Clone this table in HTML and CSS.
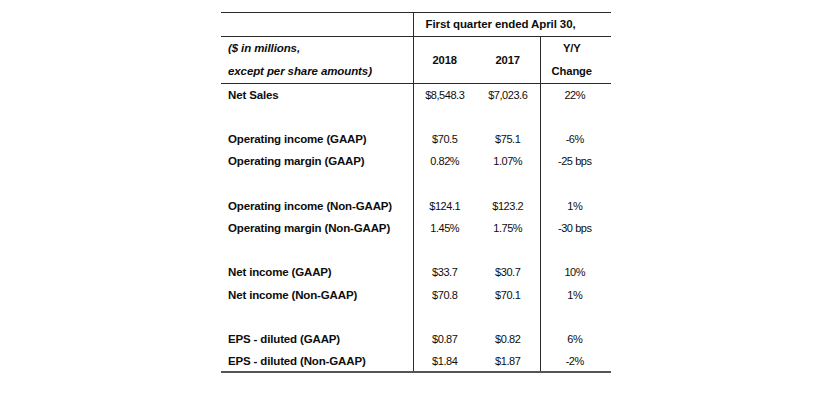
FILE: index.html
```html
<!DOCTYPE html>
<html lang="en">
<head>
<meta charset="utf-8">
<title>First quarter results</title>
<link rel="stylesheet" href="styles.css">
</head>
<body>
<div class="page">
  <table class="fin">
    <colgroup>
      <col class="c-label">
      <col class="c-y1">
      <col class="c-y2">
      <col class="c-chg">
    </colgroup>
    <thead>
      <tr class="h1">
        <th class="label"></th>
        <th class="period" colspan="3">First quarter ended April 30,</th>
      </tr>
      <tr class="h2">
        <th class="label units">($ in millions,<br>except per share amounts)</th>
        <th class="num first">2018</th>
        <th class="num">2017</th>
        <th class="num chg">Y/Y<br>Change</th>
      </tr>
    </thead>
    <tbody>
      <tr><td class="label">Net Sales</td><td class="num first">$8,548.3</td><td class="num">$7,023.6</td><td class="num chg">22%</td></tr>
      <tr class="gap"><td class="label"></td><td class="first"></td><td></td><td class="chg"></td></tr>
      <tr><td class="label">Operating income (GAAP)</td><td class="num first">$70.5</td><td class="num">$75.1</td><td class="num chg">-6%</td></tr>
      <tr><td class="label">Operating margin (GAAP)</td><td class="num first">0.82%</td><td class="num">1.07%</td><td class="num chg">-25 bps</td></tr>
      <tr class="gap"><td class="label"></td><td class="first"></td><td></td><td class="chg"></td></tr>
      <tr><td class="label">Operating income (Non-GAAP)</td><td class="num first">$124.1</td><td class="num">$123.2</td><td class="num chg">1%</td></tr>
      <tr><td class="label">Operating margin (Non-GAAP)</td><td class="num first">1.45%</td><td class="num">1.75%</td><td class="num chg">-30 bps</td></tr>
      <tr class="gap"><td class="label"></td><td class="first"></td><td></td><td class="chg"></td></tr>
      <tr><td class="label">Net income (GAAP)</td><td class="num first">$33.7</td><td class="num">$30.7</td><td class="num chg">10%</td></tr>
      <tr><td class="label">Net income (Non-GAAP)</td><td class="num first">$70.8</td><td class="num">$70.1</td><td class="num chg">1%</td></tr>
      <tr class="gap"><td class="label"></td><td class="first"></td><td></td><td class="chg"></td></tr>
      <tr><td class="label">EPS - diluted (GAAP)</td><td class="num first">$0.87</td><td class="num">$0.82</td><td class="num chg">6%</td></tr>
      <tr class="last"><td class="label">EPS - diluted (Non-GAAP)</td><td class="num first">$1.84</td><td class="num">$1.87</td><td class="num chg">-2%</td></tr>
    </tbody>
  </table>
</div>
</body>
</html>
```
FILE: styles.css
```css
html, body {
  margin: 0;
  padding: 0;
  background: #ffffff;
}

.page {
  padding: 12px 0 0 221px;
}

.fin {
  border-collapse: collapse;
  table-layout: fixed;
  width: 390px;
  font-family: "Liberation Sans", Arial, sans-serif;
  color: #0d0d0d;
}

.c-label { width: 192px; }
.c-y1 { width: 63px; }
.c-y2 { width: 64px; }
.c-chg { width: 71px; }

.fin th,
.fin td {
  padding: 0;
  vertical-align: middle;
}

.fin th {
  font-weight: bold;
  font-size: 11.5px;
  letter-spacing: -0.1px;
}

.fin .h1 th {
  border-top: 1px solid #2a2a2a;
  border-bottom: 1px solid #2a2a2a;
  height: 23px;
  line-height: 23px;
}

.fin .h1 .period {
  text-align: left;
  padding-left: 12px;
  border-left: 1px solid #2a2a2a;
}

.fin .h2 th {
  border-bottom: 1px solid #2a2a2a;
  height: 45px;
  line-height: 23px;
}

.fin .h2 .units {
  font-style: italic;
  text-align: left;
  padding-left: 7px;
  white-space: nowrap;
}

.fin .h2 .num {
  font-size: 11.2px;
}

.fin .h2 .chg {
  padding-right: 8px;
}

.fin tbody tr {
  height: 22.23px;
}

.fin tbody td {
  line-height: 14px;
}

.fin td.label {
  font-weight: bold;
  font-size: 11.5px;
  letter-spacing: -0.15px;
  text-align: left;
  padding-left: 7px;
  white-space: nowrap;
}

.fin .num {
  text-align: center;
}

.fin td.num {
  font-size: 11px;
  letter-spacing: -0.45px;
}

.fin .first {
  border-left: 1px solid #2a2a2a;
}

.fin .chg {
  border-left: 1px solid #2a2a2a;
}

.fin td.chg {
  padding-right: 2px;
}

.fin tr.last td {
  border-bottom: 2px solid #555;
}
```
